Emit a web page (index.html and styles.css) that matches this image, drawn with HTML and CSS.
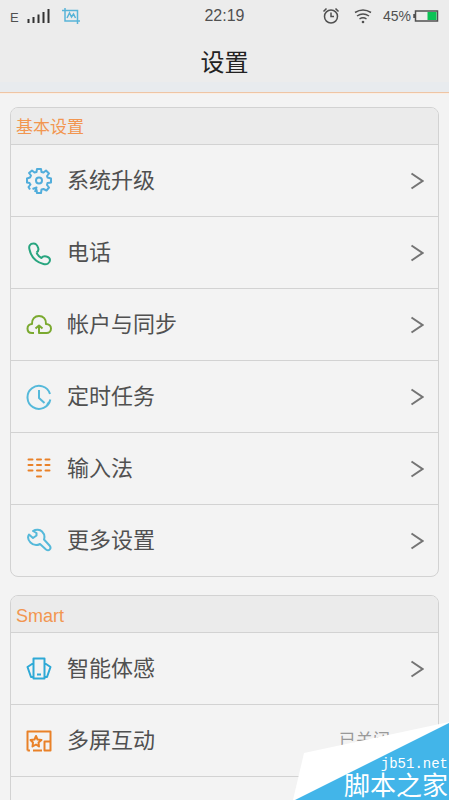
FILE: index.html
```html
<!DOCTYPE html>
<html lang="zh-CN">
<head>
<meta charset="utf-8">
<meta name="viewport" content="width=device-width, initial-scale=1">
<title>设置</title>
<link rel="stylesheet" href="styles.css">
</head>
<body>
<svg class="defs" aria-hidden="true">
  <symbol id="chevron" viewBox="0 0 14 18"><path d="M1.5 1.5 12.5 9 1.5 16.5"/></symbol>
</svg>
<div class="screen">
  <header class="top">
    <div class="status">
      <div class="status-side">
        <span class="network">E</span>
        <svg class="signal" width="24" height="16" viewBox="0 0 24 16"><path d="M1.5 15v-4M6.5 15V9M11.5 15V6.5M16.5 15V4M21.5 15V1"/></svg>
        <svg class="shot" width="18" height="16" viewBox="0 0 18 16"><path d="M3 0v13h15M0 2.5h15.5V16M5 10l2.500-5 2 4 2-3 2 4"/></svg>
      </div>
      <time class="clock">22:19</time>
      <div class="status-side status-right">
        <svg class="alarm" width="18" height="18" viewBox="0 0 18 18"><circle cx="9" cy="9.5" r="6.5"/><path d="M9 5.5v4h3M1.5 4.5 4.5 1.5M16.5 4.5 13.5 1.5"/></svg>
        <svg class="wifi" width="18" height="16" viewBox="0 0 18 16"><path d="M1 4.5Q9-.5 17 4.5M3 8Q9 4 15 8M5.5 11Q9 8.5 12.5 11"/><circle cx="9" cy="14" r="1.3"/></svg>
        <span class="percent">45%</span>
        <svg class="battery" width="26" height="12" viewBox="0 0 26 12"><path class="cell" d="M2.5 1h22v10h-22zM1 4v4"/><path class="charge" d="M14.5 2h9v8h-9z"/></svg>
      </div>
    </div>
    <h1>设置</h1>
  </header>
  <main>
    <section class="card">
      <h2>基本设置</h2>
      <a class="row" href="#update">
        <svg class="icon blue" viewBox="0 0 26 26"><path d="M4 21.5 2.5 19l2-2.5Q3.5 15.5 3.5 15L1 14.5v-4L4 9.5 5 7.5 3 5 6 2.5 8.5 4.5 10.5 4 11 1h4l.5 3 2 .5L20 2.5l3 3-2 2.5.5 1.5 3.5 1v4l-3.5.5-.5 2 2 2.5-2.5 3-3-1.5-2 .5-.5 3.5h-4l-.5-3.5M9 24l1.5-4.5L6.5 21"/><circle cx="13" cy="12.5" r="3"/></svg>
        <span class="label">系统升级</span><svg class="chevron"><use href="#chevron"/></svg>
      </a>
      <a class="row" href="#phone">
        <svg class="icon green" viewBox="0 0 26 26"><path d="M10.5 12.5c3-2 2-3.5 1.5-5-1-3-2.5-4-4.5-4C4 3.5 2.5 6 3.5 9.5c1.5 7 6.5 12.5 14 14.5 3.5 1 6.5-1 6.5-4 0-2-1.5-3-3.500-3.500-3-1-4 0-5 1.500-2-1-4-3-5-5.500"/></svg>
        <span class="label">电话</span><svg class="chevron"><use href="#chevron"/></svg>
      </a>
      <a class="row" href="#accounts">
        <svg class="icon lime" viewBox="0 0 26 26"><path d="M8 21H6c-3 0-4.500-2-4.500-4.500S3.500 12 6 12C5.500 7 9 4 13 4s7.500 3 7 8c3 0 5 2 5 4.500S23 21 20.500 21H13v-7M9.500 16.500 13 13.500l3.500 3"/></svg>
        <span class="label">帐户与同步</span><svg class="chevron"><use href="#chevron"/></svg>
      </a>
      <a class="row" href="#schedule">
        <svg class="icon sky" viewBox="0 0 26 26"><path d="M24.300 15.500A11.500 11.500 0 1 1 24 10M23 18l-2 3M13 6v8l5.500 5"/></svg>
        <span class="label">定时任务</span><svg class="chevron"><use href="#chevron"/></svg>
      </a>
      <a class="row" href="#input">
        <svg class="icon orange keys" viewBox="0 0 26 26"><path d="M2.500 3.500h4M11 3.500h4M19.500 3.500h4M2.500 9h4M11 9h4M19.500 9h4M2.500 14.500h4M11 14.500h4M19.500 14.500h4M11 20.500h4"/></svg>
        <span class="label">输入法</span><svg class="chevron"><use href="#chevron"/></svg>
      </a>
      <a class="row" href="#more">
        <svg class="icon sky" viewBox="0 0 26 26"><path d="M7 3c3-2 7-1.500 9 .5s3 5 2 8l5.500 6c2.500 3-.5 6-3.500 4l-6-5.500c-3 1.500-7 1-9.500-1.500s-3-5.500-1.500-8L7 10l3.500-2.500V5z"/></svg>
        <span class="label">更多设置</span><svg class="chevron"><use href="#chevron"/></svg>
      </a>
    </section>
    <section class="card">
      <h2 class="latin">Smart</h2>
      <a class="row" href="#motion">
        <svg class="icon cyan" viewBox="0 0 26 26"><path d="M7.500 2.500h11v20h-11zM11 18.500h4M7.500 7 1.500 11l3.500 10h2.500M18.500 7l6 4-3.500 10h-2.500"/></svg>
        <span class="label">智能体感</span><svg class="chevron"><use href="#chevron"/></svg>
      </a>
      <a class="row" href="#screens">
        <svg class="icon orange" viewBox="0 0 26 26"><path d="M1.500 22.500V3.500h23v19h-6V13.500h6M1.500 22.500h2.500M7 22.500h9M10 8l1.500 3.500 4 .5-3 2.500.5 4-3-2-3.500 2 .5-4L4.500 12l4-.5z"/></svg>
        <span class="label">多屏互动</span><span class="state">已关闭</span><svg class="chevron"><use href="#chevron"/></svg>
      </a>
      <div class="row"></div>
    </section>
  </main>
  <aside class="mark">
    <svg class="mark-shape" viewBox="0 0 156 78" preserveAspectRatio="none"><path class="paper" d="M0 78 11 31 156 0v78z"/><path class="fold" d="M2 78 156 1v77z"/></svg>
    <span class="site">jb51.net</span>
    <span class="name">脚本之家</span>
  </aside>
</div>
</body>
</html>
```
FILE: styles.css
```css
* { box-sizing: border-box; }

body {
  margin: 0;
  background: #f3f3f3;
  color: #505050;
  font-family: "Liberation Sans", "Noto Sans CJK SC", sans-serif;
}

svg {
  flex: none;
  fill: none;
  stroke: currentColor;
  stroke-width: 2;
}

.defs {
  position: absolute;
  width: 0;
  height: 0;
}

.screen {
  position: relative;
  height: 100vh;
  overflow: hidden;
}

.top {
  background: linear-gradient(#ececec 82px, #e8ebee 82px);
  border-bottom: 1px solid #eec5a5;
  box-shadow: 0 1px 0 #fbeee3;
}

.status {
  display: grid;
  grid-template-columns: 1fr auto 1fr;
  align-items: center;
  height: 32px;
  padding: 0 10px;
}

.status-side {
  display: flex;
  align-items: center;
}

.status-right { justify-content: flex-end; }

.network {
  padding-top: 4px;
  font-size: 13px;
  line-height: 16px;
}

.signal { margin-left: 8px; stroke: #333; }

.shot {
  margin-left: 11px;
  color: #58b4d8;
}

.clock { font-size: 16px; }

.alarm, .wifi, .shot, .cell { stroke-width: 1.5; }
.alarm { margin-right: 14px; }
.wifi { margin-right: 11px; }
.wifi circle { fill: currentColor; stroke: none; }

.percent {
  margin-right: 2px;
  font-size: 14px;
}

.charge { fill: #0cc255; stroke: none; }

h1 {
  margin: 0;
  height: 60px;
  color: #222;
  font-size: 24px;
  font-weight: 400;
  line-height: 62px;
  text-align: center;
}

main { padding: 14px 10px; }

.card {
  margin-bottom: 18px;
  border: 1px solid #d2d2d2;
  border-radius: 8px;
  overflow: hidden;
}

h2 {
  margin: 0;
  height: 36px;
  padding: 0 5px;
  background: #ebebeb;
  color: #f29650;
  font-size: 17px;
  font-weight: 400;
  line-height: 40px;
}

.latin { font-size: 18px; }

.row {
  display: flex;
  align-items: center;
  height: 72px;
  padding: 0 14px 0 15px;
  border-top: 1px solid #d2d2d2;
  color: inherit;
  text-decoration: none;
}

.icon {
  width: 26px;
  height: 26px;
  stroke-width: 2;
  stroke-linejoin: round;
}

.label {
  flex: 1;
  margin-left: 15px;
  font-size: 22px;
  line-height: 32px;
}

.state {
  margin-right: 20px;
  color: #999;
  font-size: 17px;
  line-height: 24px;
}

.chevron {
  width: 14px;
  height: 18px;
  color: #747474;
}

.blue { color: #51addb; }
.green { color: #28a57f; }
.lime { color: #7aa92f; }
.sky { color: #55b9da; }
.orange { color: #e98128; }
.cyan { color: #2ea9d6; }
.keys { stroke-linecap: round; }

.mark {
  position: absolute;
  right: 0;
  bottom: 0;
  display: flex;
  flex-direction: column;
  align-items: flex-end;
  justify-content: flex-end;
  width: 156px;
  height: 78px;
  padding-right: 1px;
  color: #fff;
}

.mark-shape {
  position: absolute;
  inset: 0;
  width: 100%;
  height: 100%;
  stroke: none;
}

.paper { fill: #fff; }
.fold { fill: #42b5e9; }

.site, .name { position: relative; }

.site {
  font-family: "Liberation Mono", monospace;
  font-size: 14px;
  line-height: 16px;
}

.name {
  font-size: 26px;
  line-height: 28px;
}
```
